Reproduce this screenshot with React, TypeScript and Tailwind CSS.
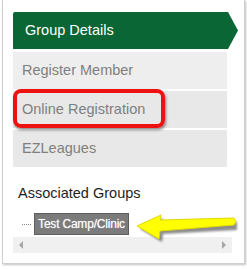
import React from "react";

const font = { fontFamily: '"Liberation Sans", Arial, sans-serif' };

function MenuRow({ label, active = false }: { label: string; active?: boolean }) {
  if (active) {
    return (
      <div className="h-[37px] w-[225px] bg-[#0a6634] rounded-tl-[2px] flex items-center pl-[12px] text-white text-[14.5px] [clip-path:polygon(0_0,215px_0,225px_50%,215px_100%,0_100%)]">
        {label}
      </div>
    );
  }
  return (
    <div className="h-[37px] w-[214px] bg-[#e8e8e8] flex items-center pl-[9px] text-[#7f7f7f] text-[14.5px]">
      {label}
    </div>
  );
}

export default function App() {
  return (
    <div className="relative w-[247px] h-[269px] bg-white overflow-hidden" style={font}>
      <div className="ml-[2px] w-[243px] h-[264px] border-l border-r border-b border-[#cfcfcf] shadow-[1px_1px_2px_rgba(0,0,0,0.25)] pl-[10px] pt-[12px]">
        <div className="flex flex-col gap-[2px]">
          <MenuRow label="Group Details" active />
          <div className="h-[37px] w-[214px] bg-[#eeeeee] flex items-center pl-[9px] text-[#7f7f7f] text-[14.5px] mt-[1px]">
            Register Member
          </div>
          <MenuRow label="Online Registration" />
          <MenuRow label="EZLeagues" />
        </div>

        <div className="mt-[16px] ml-[5px] text-[14.5px] leading-[20px] text-[#1e1e1e]">Associated Groups</div>

        <div className="mt-[10px] flex items-center h-[22px]">
          <div className="ml-[9px] w-[9px] border-t border-dotted border-[#8a8a8a]" />
          <div className="ml-[3px] h-[22px] w-[95px] bg-[#7b7b7b] border border-[#5e5e5e] flex items-center justify-center text-white text-[12px] tracking-[-0.2px] [text-shadow:0_0_1px_rgba(255,255,255,0.6)]">
            Test Camp/Clinic
          </div>
        </div>

        <div className="mt-[2px] w-[219px] h-[16px] bg-[#f0f0f0] flex items-center justify-between px-[6px]">
          <div className="w-0 h-0 border-y-[4px] border-y-transparent border-r-[4px] border-r-[#a6a6a6]" />
          <div className="w-0 h-0 border-y-[4px] border-y-transparent border-l-[4px] border-l-[#a6a6a6]" />
        </div>
      </div>

      {/* red highlight */}
      <div className="absolute left-[13px] top-[89px] w-[152px] h-[39px] rounded-[8px] border-[4px] border-[#ee1111] shadow-[1px_2px_3px_rgba(0,0,0,0.45)]" />

      {/* yellow arrow */}
      <svg className="absolute left-[130px] top-[205px]" width="115" height="40" viewBox="0 0 115 40">
        <defs>
          <filter id="sh" x="-10%" y="-30%" width="130%" height="160%">
            <feGaussianBlur stdDeviation="1.2" />
          </filter>
        </defs>
        <polygon
          points="10,24 33,13 32,18 107,17 107,25 33,29 32,37"
          fill="rgba(0,0,0,0.45)"
          filter="url(#sh)"
        />
        <polygon
          points="7,21 31,10 30,15 104,13 106,16.5 104,20 30,26 29,34"
          fill="#ffff00"
          stroke="#e2d800"
          strokeWidth="1"
          strokeLinejoin="round"
        />
      </svg>
    </div>
  );
}
